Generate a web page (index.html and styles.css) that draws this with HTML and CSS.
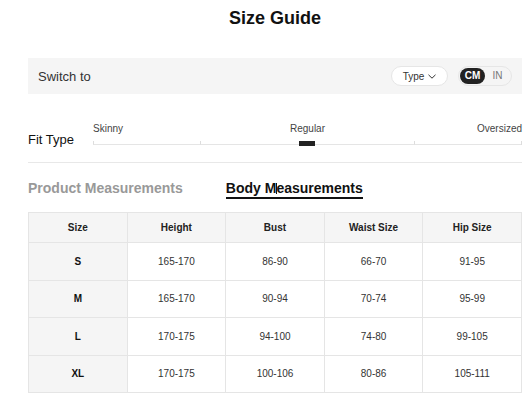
FILE: index.html
```html
<!DOCTYPE html>
<html lang="en">
<head>
  <meta charset="UTF-8" />
  <meta name="viewport" content="width=device-width, initial-scale=1.0" />
  <title>Size Guide</title>
  <link rel="stylesheet" href="styles.css">
</head>
<body>
  <div class="page">
    <h1 class="title">Size Guide</h1>

    <div class="switch-bar">
      <span class="switch-label">Switch to</span>
      <div class="switch-controls">
        <button class="type-btn">Type
          <svg width="8" height="5" viewBox="0 0 8 5"><path d="M0.5 0.8 L4 4.2 L7.5 0.8" fill="none" stroke="#333" stroke-width="1"/></svg>
        </button>
        <div class="unit-toggle">
          <span class="unit active">CM</span>
          <span class="unit">IN</span>
        </div>
      </div>
    </div>

    <div class="fit">
      <div class="fit-label">Fit Type</div>
      <div class="fit-scale">
        <div class="fit-names">
          <span>Skinny</span>
          <span class="mid">Regular</span>
          <span class="end">Oversized</span>
        </div>
        <div class="fit-track">
          <span class="seg"></span>
          <span class="seg"></span>
          <span class="seg"></span>
          <span class="seg"></span>
          <span class="thumb"></span>
        </div>
      </div>
    </div>

    <div class="tabs">
      <span class="tab">Product Measurements</span>
      <span class="tab active">Body M<span class="caret"></span>easurements</span>
    </div>

    <table class="sizes">
      <thead>
        <tr><th>Size</th><th>Height</th><th>Bust</th><th>Waist Size</th><th>Hip Size</th></tr>
      </thead>
      <tbody>
        <tr><td>S</td><td>165-170</td><td>86-90</td><td>66-70</td><td>91-95</td></tr>
        <tr><td>M</td><td>165-170</td><td>90-94</td><td>70-74</td><td>95-99</td></tr>
        <tr><td>L</td><td>170-175</td><td>94-100</td><td>74-80</td><td>99-105</td></tr>
        <tr><td>XL</td><td>170-175</td><td>100-106</td><td>80-86</td><td>105-111</td></tr>
      </tbody>
    </table>
  </div>
</body>
</html>
```

FILE: styles.css
```css
body {
  margin: 0;
  font-family: "Liberation Sans", Arial, sans-serif;
  color: #222;
  background: #fff;
}
.page {
  padding: 0 7px 0 28px;
}
.title {
  margin: 0;
  padding-top: 8px;
  font-size: 18px;
  line-height: 20px;
  font-weight: 700;
  text-align: center;
  color: #111;
}
.switch-bar {
  margin-top: 30px;
  height: 36px;
  background: #f5f5f5;
  display: flex;
  align-items: center;
  justify-content: space-between;
  padding: 0 10px;
}
.switch-label {
  font-size: 13px;
  color: #333;
}
.switch-controls {
  display: flex;
  align-items: center;
  gap: 10px;
}
.type-btn {
  height: 20px;
  width: 57px;
  border: 1px solid #e6e6e6;
  border-radius: 10px;
  background: #fff;
  font-family: inherit;
  font-size: 10px;
  color: #333;
  display: flex;
  align-items: center;
  justify-content: center;
  gap: 4px;
  padding: 0;
}
.unit-toggle {
  height: 20px;
  width: 54px;
  box-sizing: border-box;
  border: 1px solid #e6e6e6;
  border-radius: 10px;
  display: flex;
  align-items: center;
  padding: 0 1px;
}
.unit {
  height: 16px;
  width: 25px;
  border-radius: 8px;
  font-size: 10px;
  line-height: 16px;
  text-align: center;
  color: #777;
}
.unit.active {
  background: #222;
  color: #fff;
  font-weight: 700;
}
.fit {
  display: flex;
  align-items: flex-start;
  padding: 29px 0 17px;
  border-bottom: 1px solid #e8e8e8;
}
.fit-label {
  width: 65px;
  padding-top: 10px;
  margin-bottom: -1px;
  font-size: 13px;
  line-height: 13px;
  color: #111;
}
.fit-scale {
  flex: 1;
}
.fit-names {
  display: grid;
  grid-template-columns: 1fr auto 1fr;
  font-size: 10px;
  line-height: 12px;
  color: #444;
}
.fit-names .end {
  text-align: right;
}
.fit-track {
  position: relative;
  display: flex;
  margin-top: 6px;
  border-right: 1px solid #ddd;
}
.seg {
  flex: 1;
  height: 3px;
  border-left: 1px solid #ddd;
  border-bottom: 1px solid #e5e5e5;
}
.thumb {
  position: absolute;
  left: 50%;
  top: 0;
  width: 16px;
  height: 5px;
  margin-left: -8px;
  background: #222;
}
.tabs {
  display: flex;
  gap: 43px;
  margin-top: 17px;
}
.tab {
  font-size: 14px;
  line-height: 16px;
  font-weight: 700;
  color: #999;
  padding-bottom: 1px;
}
.tab.active {
  color: #111;
  border-bottom: 2px solid #111;
}
.caret {
  display: inline-block;
  width: 1px;
  height: 11px;
  margin-right: -1px;
  vertical-align: -1px;
  background: #111;
}
.sizes {
  margin-top: 13px;
  width: 494px;
  border-collapse: collapse;
  table-layout: fixed;
  font-size: 10px;
  color: #333;
}
.sizes th, .sizes td {
  border: 1px solid #e5e5e5;
  text-align: center;
  padding: 0;
}
.sizes th {
  height: 29px;
  background: #f5f5f5;
  font-weight: 700;
  color: #222;
}
.sizes td {
  height: 36.5px;
}
.sizes td:first-child {
  background: #f5f5f5;
  font-weight: 700;
  color: #111;
}
```
